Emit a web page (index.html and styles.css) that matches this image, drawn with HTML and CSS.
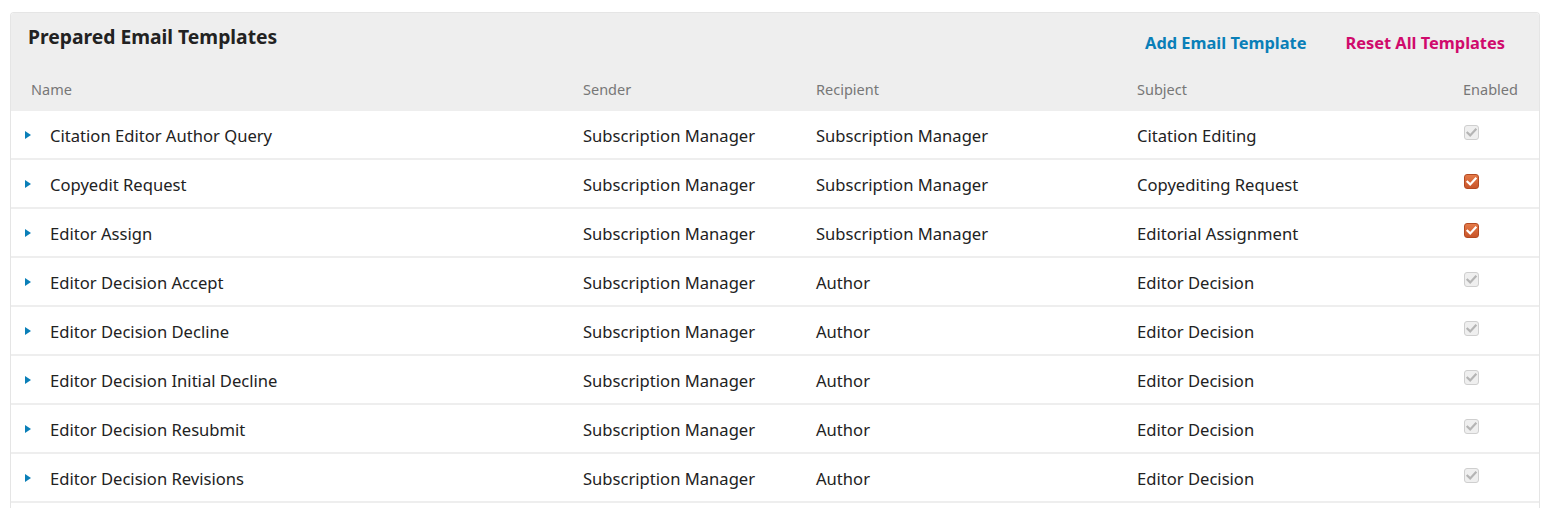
FILE: index.html
```html
<!DOCTYPE html>
<html>
<head>
<meta charset="utf-8">
<link rel="stylesheet" href="styles.css">
</head>
<body>
<div class="panel">
  <div class="panel-head">
    <div class="title-bar">
      <h2 class="title">Prepared Email Templates</h2>
      <div class="actions">
        <a class="action add">Add Email Template</a>
        <a class="action reset">Reset All Templates</a>
      </div>
    </div>
    <div class="row cols">
      <div class="cell c-name">Name</div>
      <div class="cell">Sender</div>
      <div class="cell">Recipient</div>
      <div class="cell">Subject</div>
      <div class="cell">Enabled</div>
    </div>
  </div>
  <div class="body">
    <div class="row item"><div class="cell c-name"><span class="arrow"></span>Citation Editor Author Query</div><div class="cell">Subscription Manager</div><div class="cell">Subscription Manager</div><div class="cell">Citation Editing</div><div class="cell"><span class="chk off"><svg viewBox="0 0 15 15"><path d="M3.5 7.8 L6.2 10.4 L11.6 4.6" /></svg></span></div></div>
    <div class="row item"><div class="cell c-name"><span class="arrow"></span>Copyedit Request</div><div class="cell">Subscription Manager</div><div class="cell">Subscription Manager</div><div class="cell">Copyediting Request</div><div class="cell"><span class="chk on"><svg viewBox="0 0 15 15"><path d="M3.5 7.8 L6.2 10.4 L11.6 4.6" /></svg></span></div></div>
    <div class="row item"><div class="cell c-name"><span class="arrow"></span>Editor Assign</div><div class="cell">Subscription Manager</div><div class="cell">Subscription Manager</div><div class="cell">Editorial Assignment</div><div class="cell"><span class="chk on"><svg viewBox="0 0 15 15"><path d="M3.5 7.8 L6.2 10.4 L11.6 4.6" /></svg></span></div></div>
    <div class="row item"><div class="cell c-name"><span class="arrow"></span>Editor Decision Accept</div><div class="cell">Subscription Manager</div><div class="cell">Author</div><div class="cell">Editor Decision</div><div class="cell"><span class="chk off"><svg viewBox="0 0 15 15"><path d="M3.5 7.8 L6.2 10.4 L11.6 4.6" /></svg></span></div></div>
    <div class="row item"><div class="cell c-name"><span class="arrow"></span>Editor Decision Decline</div><div class="cell">Subscription Manager</div><div class="cell">Author</div><div class="cell">Editor Decision</div><div class="cell"><span class="chk off"><svg viewBox="0 0 15 15"><path d="M3.5 7.8 L6.2 10.4 L11.6 4.6" /></svg></span></div></div>
    <div class="row item"><div class="cell c-name"><span class="arrow"></span>Editor Decision Initial Decline</div><div class="cell">Subscription Manager</div><div class="cell">Author</div><div class="cell">Editor Decision</div><div class="cell"><span class="chk off"><svg viewBox="0 0 15 15"><path d="M3.5 7.8 L6.2 10.4 L11.6 4.6" /></svg></span></div></div>
    <div class="row item"><div class="cell c-name"><span class="arrow"></span>Editor Decision Resubmit</div><div class="cell">Subscription Manager</div><div class="cell">Author</div><div class="cell">Editor Decision</div><div class="cell"><span class="chk off"><svg viewBox="0 0 15 15"><path d="M3.5 7.8 L6.2 10.4 L11.6 4.6" /></svg></span></div></div>
    <div class="row item"><div class="cell c-name"><span class="arrow"></span>Editor Decision Revisions</div><div class="cell">Subscription Manager</div><div class="cell">Author</div><div class="cell">Editor Decision</div><div class="cell"><span class="chk off"><svg viewBox="0 0 15 15"><path d="M3.5 7.8 L6.2 10.4 L11.6 4.6" /></svg></span></div></div>
  </div>
</div>
</body>
</html>
```
FILE: styles.css
```css
html, body {
  margin: 0;
  background: #fff;
}
body {
  padding: 12px 6px 0 10px;
  font-family: "Noto Sans", "Open Sans", sans-serif;
  color: #222;
  overflow: hidden;
}
.panel {
  border: 1px solid #e5e5e5;
  border-bottom: 0;
  border-radius: 4px 4px 0 0;
  overflow: hidden;
}
.panel-head {
  background: #eee;
}
.title-bar {
  display: flex;
  justify-content: space-between;
  align-items: flex-start;
  height: 59px;
}
.title {
  margin: 0;
  padding: 11px 0 0 17px;
  font-size: 19.3px;
  font-weight: 700;
  line-height: 26px;
  color: #222;
}
.actions {
  display: flex;
  gap: 39px;
  padding: 18px 34px 0 0;
}
.action {
  font-size: 16.4px;
  font-weight: 700;
  line-height: 24px;
  cursor: pointer;
}
.add { color: #0a7fb8; }
.reset { color: #d00a6c; }
.row {
  display: grid;
  grid-template-columns: 552px 233px 321px 326px 1fr;
}
.cols {
  height: 39px;
  align-items: start;
  font-size: 14.5px;
  color: #777;
  line-height: 18px;
}
.cols .cell {
  padding: 8px 0 0 20px;
}
.body {
  background: #fff;
  padding-bottom: 30px;
}
.item {
  height: 47px;
  align-items: center;
  border-bottom: 2px solid #eee;
  font-size: 16.6px;
  line-height: 22px;
}
.item .cell {
  padding: 2px 0 0 20px;
  display: flex;
  align-items: center;
}
.item .c-name {
  padding-left: 14px;
}
.arrow {
  width: 0;
  height: 0;
  border-top: 4px solid transparent;
  border-bottom: 4px solid transparent;
  border-left: 6px solid #0a7fb8;
  margin-right: 19px;
  margin-top: -2px;
}
.chk {
  width: 15px;
  height: 15px;
  box-sizing: border-box;
  border-radius: 3px;
  display: inline-block;
  margin-top: -6px;
  margin-left: 1px;
}
.chk svg {
  width: 15px;
  height: 15px;
  display: block;
  margin: -1px;
}
.chk path {
  fill: none;
  stroke-width: 2.2;
  stroke-linecap: square;
}
.chk.off {
  background: #efefef;
  border: 1px solid #cfcfcf;
}
.chk.off path { stroke: #b5b5b5; }
.chk.on {
  background: linear-gradient(#e47a48, #c9552a);
  border: 1px solid #b44a22;
}
.chk.on path { stroke: #fff; }
```
